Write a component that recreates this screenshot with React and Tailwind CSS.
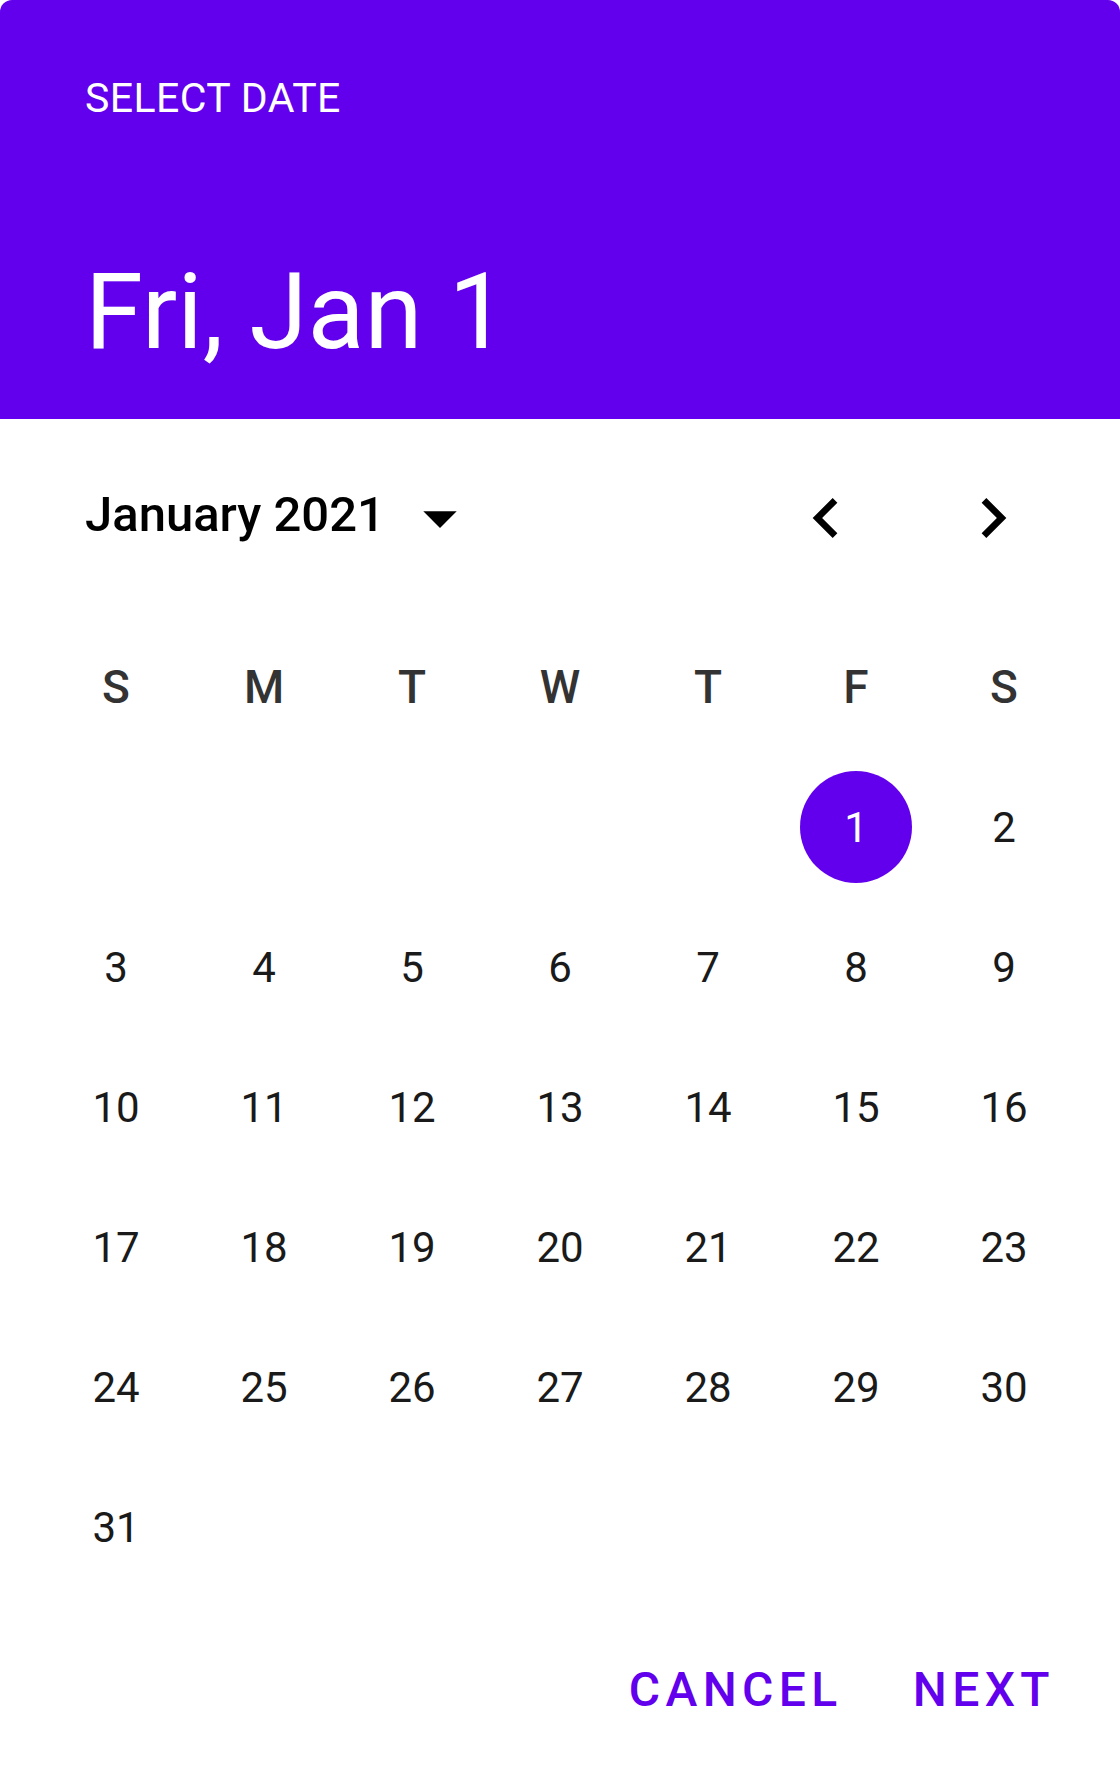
import React, { useState } from 'react';

const DIAS = ['S', 'M', 'T', 'W', 'T', 'F', 'S'];

// enero 2021 empieza en viernes -> 5 huecos
const celdas = [...Array(5).fill(null), ...Array.from({ length: 31 }, (_, i) => i + 1)];

const Flecha = ({ d }) => (
  <svg width="80" height="80" viewBox="0 0 24 24" className="shrink-0">
    <path d={d} fill="#000" />
  </svg>
);

export default function App() {
  const [seleccionado, setSeleccionado] = useState(1);

  return (
    <div className="w-[1120px] h-[1778px] bg-white font-[Roboto,sans-serif]">
      <div className="w-full h-full rounded-[12px] overflow-hidden bg-white flex flex-col">
        {/* cabecera */}
        <div className="h-[419px] shrink-0 bg-[#6200EE] pl-[85px] pt-[74px] text-white">
          <div className="text-[41px] leading-[48px] tracking-[0.4px]">SELECT DATE</div>
          <div className="mt-[130px] text-[105px] leading-[122px]">Fri, Jan {seleccionado}</div>
        </div>

        {/* mes */}
        <div className="flex items-start pl-[85px] pr-[87px] mt-[59px] h-[80px]">
          <span className="text-[49px] leading-[74px] font-medium text-black">January 2021</span>
          <div className="ml-[15px]">
            <Flecha d="M7 10l5 5 5-5z" />
          </div>
          <div className="flex-1" />
          <Flecha d="M15.41 7.41L14 6l-6 6 6 6 1.41-1.41L10.83 12z" />
          <div className="w-[87px]" />
          <Flecha d="M10 6L8.59 7.41 13.17 12l-4.58 4.59L10 18l6-6z" />
        </div>

        {/* calendario */}
        <div className="mt-[59px] px-[42px] grid grid-cols-7">
          {DIAS.map((d, i) => (
            <div key={i} className="h-[140px] flex items-center justify-center text-[46px] font-medium text-[#333]">
              {d}
            </div>
          ))}
          {celdas.map((n, i) => (
            <div key={i} className="h-[140px] flex items-center justify-center">
              {n && (
                <button
                  onClick={() => setSeleccionado(n)}
                  className={
                    n === seleccionado
                      ? 'w-[112px] h-[112px] rounded-full bg-[#6200EE] text-white text-[42px] flex items-center justify-center'
                      : 'w-[112px] h-[112px] rounded-full text-[#1a1a1a] text-[42px] flex items-center justify-center'
                  }
                >
                  {n}
                </button>
              )}
            </div>
          ))}
        </div>

        {/* acciones */}
        <div className="flex-1" />
        <div className="flex justify-end pr-[65px] mb-[60px] gap-[70px]">
          <button className="text-[48px] leading-[56px] font-medium tracking-[5.4px] text-[#6200EE]">CANCEL</button>
          <button className="text-[48px] leading-[56px] font-medium tracking-[5.4px] text-[#6200EE]">NEXT</button>
        </div>
      </div>
    </div>
  );
}
